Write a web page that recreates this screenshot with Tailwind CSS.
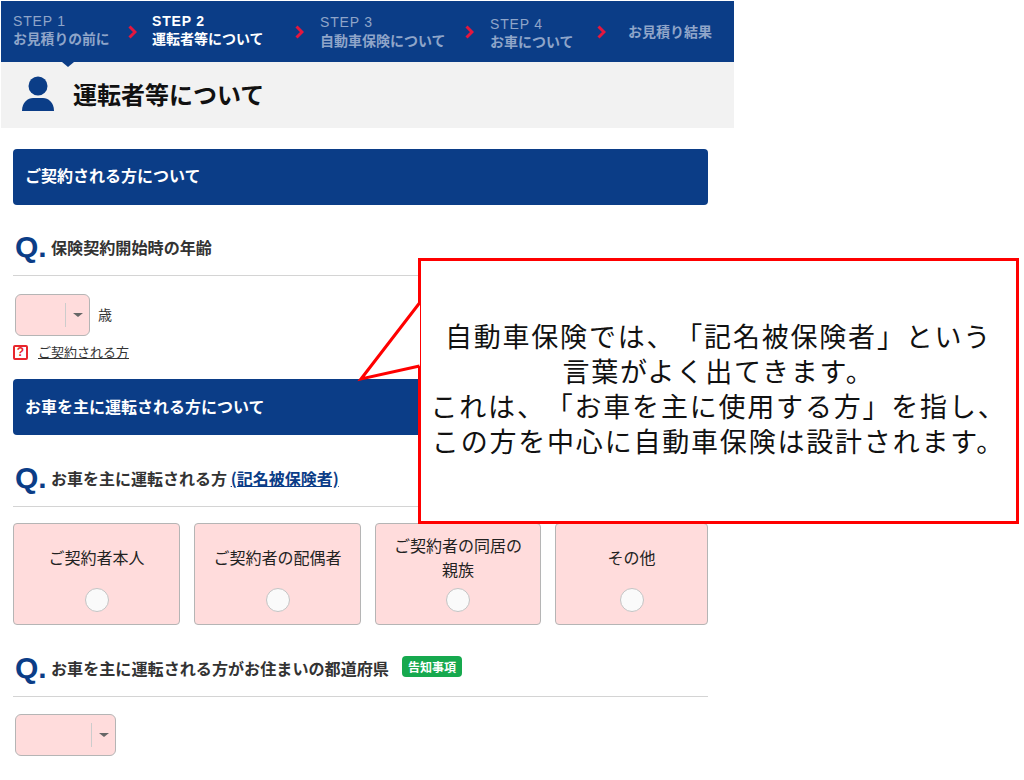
<!DOCTYPE html>
<html lang="ja">
<head>
  <meta charset="UTF-8" />
  <title>運転者等について</title>
  <script src="https://cdn.jsdelivr.net/npm/@tailwindcss/browser@4"></script>
</head>
<body class="bg-white font-['Noto_Sans_CJK_JP','Noto_Sans',sans-serif] text-[#222]">
  <div class="relative w-[1024px] h-[780px] overflow-hidden">
    <div class="w-[735px] pt-px">
      <!-- steps -->
      <div class="relative ml-px w-[733px] h-[61px] bg-[#0b3d87] flex items-center text-[14px] leading-[17px] font-bold text-[#8fa5c9]">
        <div class="w-[112px] ml-3 mb-[3px]"><p class="font-['Liberation_Sans',sans-serif] font-normal tracking-[0.800px]">STEP 1</p><p class="text-[13.8px]">お見積りの前に</p></div>
        <svg class="w-[9px] h-[14px] ml-[3px]" viewBox="0 0 9 14"><path d="M1.5 1.5 7 7l-5.500 5.500" fill="none" stroke="#e4173e" stroke-width="3"/></svg>
        <div class="w-[143px] ml-[15px] mb-[3px] text-white"><p class="font-['Liberation_Sans',sans-serif] tracking-[0.800px]">STEP 2</p><p>運転者等について</p></div>
        <svg class="w-[9px] h-[14px]" viewBox="0 0 9 14"><path d="M1.500 1.500 7 7l-5.500 5.500" fill="none" stroke="#e4173e" stroke-width="3"/></svg>
        <div class="w-[145px] ml-4 mb-[2px] leading-[18px]"><p class="font-['Liberation_Sans',sans-serif] font-normal tracking-[0.800px]">STEP 3</p><p>自動車保険について</p></div>
        <svg class="w-[9px] h-[14px]" viewBox="0 0 9 14"><path d="M1.500 1.500 7 7l-5.500 5.500" fill="none" stroke="#e4173e" stroke-width="3"/></svg>
        <div class="w-[107px] ml-4 mt-[3px]"><p class="font-['Liberation_Sans',sans-serif] font-normal tracking-[0.800px]">STEP 4</p><p>お車について</p></div>
        <svg class="w-[9px] h-[14px]" viewBox="0 0 9 14"><path d="M1.500 1.500 7 7l-5.500 5.500" fill="none" stroke="#e4173e" stroke-width="3"/></svg>
        <div class="ml-[22px]">お見積り結果</div>
        <div class="absolute left-[61px] top-full w-0 h-0 border-x-[6px] border-x-transparent border-t-[5px] border-t-[#0b3d87]"></div>
      </div>
      <!-- title -->
      <div class="ml-px w-[733px] h-[66px] bg-[#f2f2f2] flex items-center">
        <svg class="w-[34px] h-[36px] ml-[20px] mt-[-3px]" viewBox="0 0 34 36"><circle cx="17" cy="10" r="9.500" fill="#0b3d87"/><path d="M1 35c0-9 6-13 11-13h10c5 0 11 4 11 13z" fill="#0b3d87"/></svg>
        <h1 class="ml-[18px] mt-[-2px] text-[24px] leading-8 font-bold text-[#111]">運転者等について</h1>
      </div>

      <div class="mx-[13px] w-[695px]">
        <div class="mt-[21px] h-14 rounded-[4px] bg-[#0b3d87] flex items-center pl-3 pb-[5px] text-[16px] font-bold text-white">ご契約される方について</div>

        <div class="h-[71px] border-b border-[#d4d4d4] flex items-end pb-[10px]">
          <span class="w-[38px] pl-[2px] font-['Liberation_Sans',sans-serif] text-[30px] leading-[36px] font-bold text-[#0b3d87]">Q.</span>
          <span class="text-[16.1px] leading-[36px] font-bold text-[#333]">保険契約開始時の年齢</span>
        </div>

        <div class="mt-[18px] ml-[2px] flex items-center">
          <div class="w-[75px] h-[42px] rounded-[6px] bg-[#ffdcdc] border border-[#b5b5b5] flex items-center justify-end">
            <div class="w-6 h-6 border-l border-[#ccc] flex items-center justify-center"><div class="w-0 h-0 border-x-[5px] border-x-transparent border-t-[4px] border-t-[#666]"></div></div>
          </div>
          <span class="ml-2 mb-[2px] text-[14px] text-[#333]">歳</span>
        </div>
        <div class="mt-2 flex items-center h-4">
          <span class="w-[15px] h-[15px] rounded-[2px] bg-white border-2 border-[#e8262d] flex items-center justify-center font-['Liberation_Sans',sans-serif] text-[12px] leading-none font-bold text-[#e8262d]">?</span>
          <a class="ml-[10px] text-[13px] leading-4 text-[#333] underline">ご契約される方</a>
        </div>

        <div class="mt-[19px] h-14 rounded-[4px] bg-[#0b3d87] flex items-center pl-3 pb-[3px] text-[16px] font-bold text-white">お車を主に運転される方について</div>

        <div class="h-[72px] border-b border-[#d4d4d4] flex items-end pb-[10px]">
          <span class="w-[38px] pl-[2px] font-['Liberation_Sans',sans-serif] text-[30px] leading-[36px] font-bold text-[#0b3d87]">Q.</span>
          <span class="text-[16px] leading-[36px] font-bold text-[#333]">お車を主に運転される方 <a class="text-[#0b3d87] underline">(記名被保険者)</a></span>
        </div>

        <div class="mt-4 flex text-[16px] leading-[24px] text-[#222] text-center">
          <div class="w-[167px] h-[102px] rounded-[4px] bg-[#ffdcdc] border border-[#b5b5b5] flex flex-col items-center pt-[21px]">
            <p>ご契約者本人</p>
            <span class="mt-[19px] size-6 rounded-full bg-[#fafafa] border border-[#c4c4c4]"></span>
          </div>
          <div class="ml-[14px] w-[167px] h-[102px] rounded-[4px] bg-[#ffdcdc] border border-[#b5b5b5] flex flex-col items-center pt-[21px]">
            <p>ご契約者の配偶者</p>
            <span class="mt-[19px] size-6 rounded-full bg-[#fafafa] border border-[#c4c4c4]"></span>
          </div>
          <div class="ml-[14px] w-[166px] h-[102px] rounded-[4px] bg-[#ffdcdc] border border-[#b5b5b5] flex flex-col items-center pt-[9px]">
            <p>ご契約者の同居の<br />親族</p>
            <span class="mt-[7px] size-6 rounded-full bg-[#fafafa] border border-[#c4c4c4]"></span>
          </div>
          <div class="ml-[14px] w-[153px] h-[102px] rounded-[4px] bg-[#ffdcdc] border border-[#b5b5b5] flex flex-col items-center pt-[21px]">
            <p>その他</p>
            <span class="mt-[19px] size-6 rounded-full bg-[#fafafa] border border-[#c4c4c4]"></span>
          </div>
        </div>

        <div class="h-[72px] border-b border-[#d4d4d4] flex items-end pb-[10px]">
          <span class="w-[38px] pl-[2px] font-['Liberation_Sans',sans-serif] text-[30px] leading-[36px] font-bold text-[#0b3d87]">Q.</span>
          <span class="text-[16.1px] leading-[36px] font-bold text-[#333]">お車を主に運転される方がお住まいの都道府県</span>
          <span class="ml-[13px] mb-[9px] w-[60px] h-[21px] rounded-[4px] bg-[#16a94e] flex items-center justify-center text-[12px] leading-none font-bold text-white">告知事項</span>
        </div>

        <div class="mt-[17px] ml-[2px] w-[101px] h-[42px] rounded-[6px] bg-[#ffdcdc] border border-[#b5b5b5] flex items-center justify-end">
          <div class="w-6 h-6 border-l border-[#ccc] flex items-center justify-center"><div class="w-0 h-0 border-x-[5px] border-x-transparent border-t-[4px] border-t-[#666]"></div></div>
        </div>
      </div>
    </div>

    <!-- callout over the form -->
    <div class="absolute left-[418px] top-[258px] w-[601px] h-[266px] bg-white border-[3px] border-[#ff0000] flex items-center justify-center pb-[6px] text-center text-[27px] leading-[35px] tracking-[1.800px] [text-spacing-trim:space-all] text-[#111]">
      <p class="whitespace-nowrap">自動車保険では、「記名被保険者」という<br />言葉がよく出てきます。<br />これは、「お車を主に使用する方」を指し、<br />この方を中心に自動車保険は設計されます。</p>
    </div>
    <svg class="absolute left-[355px] top-[295px]" width="70" height="92" viewBox="0 0 70 92">
      <path d="M65 8 6 84l59-13z" fill="#fff"/>
      <path d="M64.500 8 6 84l58.500-13" fill="none" stroke="#ff0000" stroke-width="3"/>
    </svg>
  </div>
</body>
</html>
